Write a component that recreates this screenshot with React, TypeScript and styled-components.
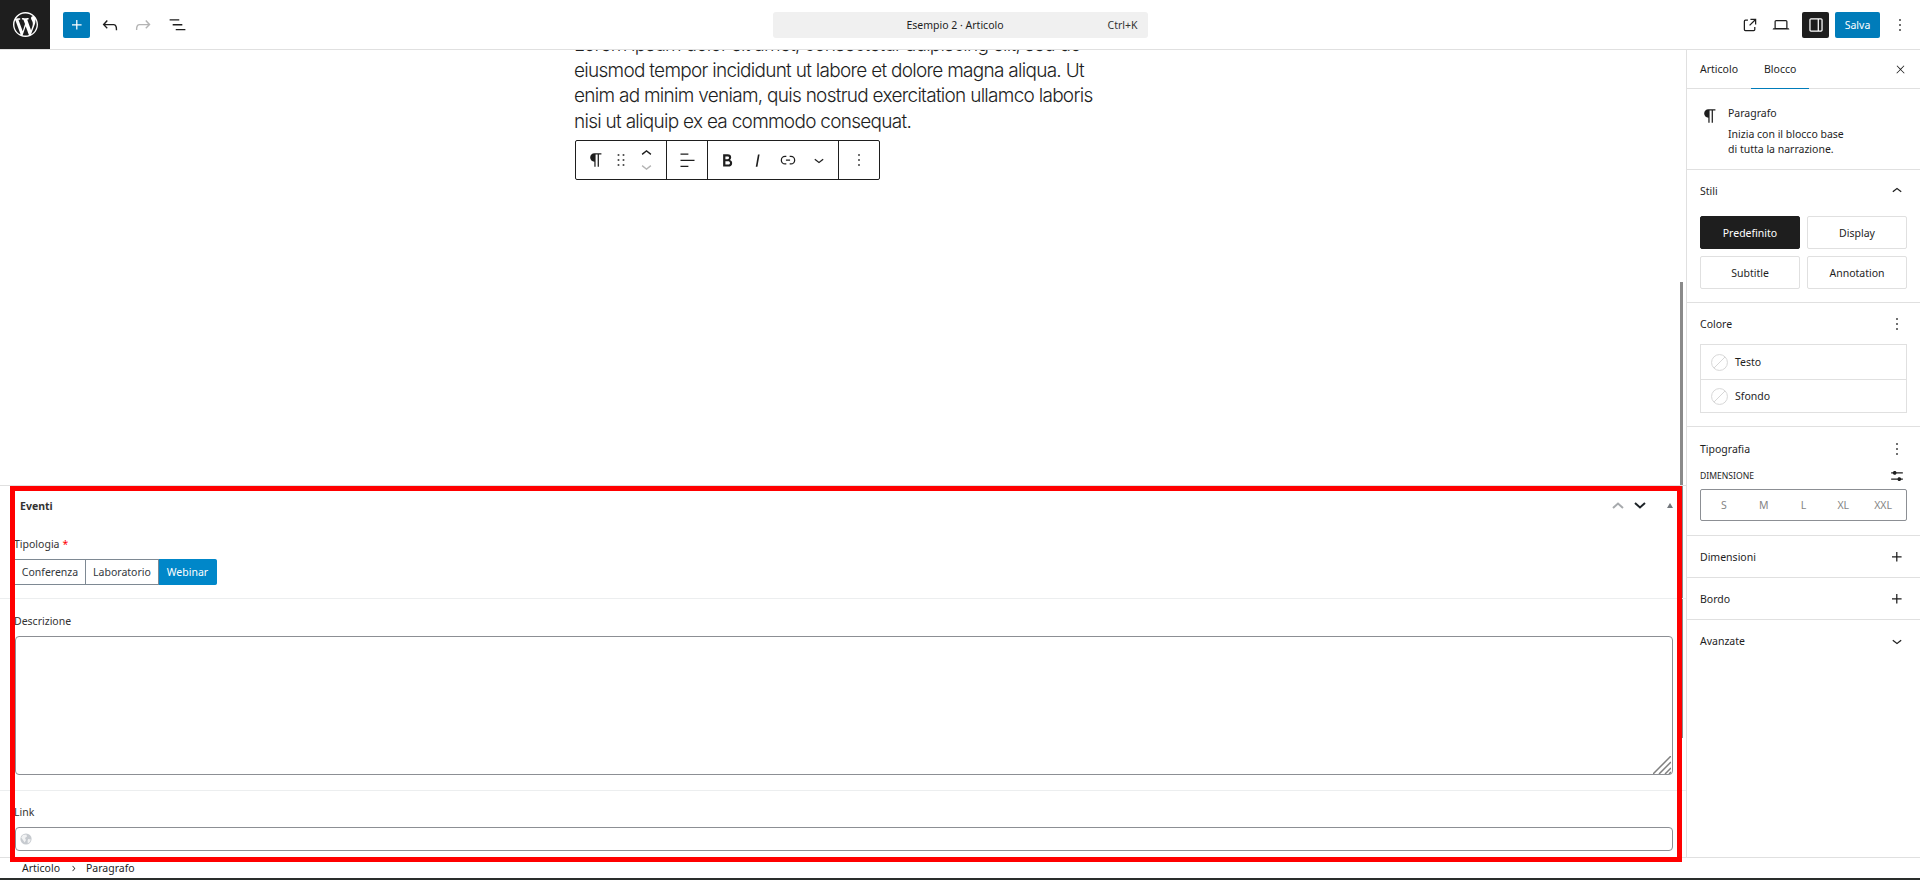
import React, { FC } from "react";
import styled, { createGlobalStyle } from "styled-components";

const GlobalStyle = createGlobalStyle`
    html, body {
        margin: 0;
        padding: 0;
        background: #fff;
    }
    body {
        font-family: "Noto Sans", "Open Sans", sans-serif;
        font-size: 10.5px;
        color: #1e1e1e;
    }
`;

const paths = {
    plus: "M11 12.5V17.5H12.5V12.5H17.5V11H12.5V6H11V11H6V12.5H11Z",
    undo: "M18.3 11.7c-.6-.6-1.4-.9-2.3-.9H6.7l2.9-3.3-1.1-1-4.5 5L8.5 16l1-1-2.7-2.7H16c.5 0 .9.2 1.3.5 1 1 1 3.4 1 4.5v.3h1.5v-.2c0-1.5 0-4.3-1.5-5.7z",
    redo: "M15.6 6.5l-1.1 1 2.9 3.3H8c-.9 0-1.7.3-2.3.9-1.4 1.5-1.4 4.2-1.4 5.6v.2h1.5v-.3c0-1.1 0-3.5 1-4.5.3-.3.7-.5 1.3-.5h9.2L14.5 15l1.1 1.1 4.6-4.6-4.6-5z",
    listView: "M3 6h11v1.5H3V6Zm3.5 5.5h11V13h-11v-1.5ZM21 17H10v1.5h11V17Z",
    external: "M19.5 4.5h-7V6h4.44l-5.97 5.97 1.06 1.06L18 7.06v4.44h1.5v-7Zm-13 1a2 2 0 0 0-2 2v10a2 2 0 0 0 2 2h10a2 2 0 0 0 2-2v-3H17v3a.5.5 0 0 1-.5.5h-10a.5.5 0 0 1-.5-.5v-10a.5.5 0 0 1 .5-.5h3V5.5h-3Z",
    laptop: "M20.5 16h-.7V8c0-1.1-.9-2-2-2H6.2c-1.1 0-2 .9-2 2v8h-.7c-.8 0-1.5.7-1.5 1.5h20c0-.8-.7-1.5-1.5-1.5zM5.7 8c0-.3.2-.5.5-.5h11.6c.3 0 .5.2.5.5v7.6H5.7V8z",
    drawer: "M18 4H6c-1.1 0-2 .9-2 2v12c0 1.1.9 2 2 2h12c1.1 0 2-.9 2-2V6c0-1.1-.9-2-2-2zm-4 14.5H6c-.3 0-.5-.2-.5-.5V6c0-.3.2-.5.5-.5h8v13zm4.5-.5c0 .3-.2.5-.5.5h-2.5v-13H18c.3 0 .5.2.5.5v12z",
    more: "M13 19h-2v-2h2v2zm0-6h-2v-2h2v2zm0-6h-2V5h2v2z",
    paragraph: "m9.99609 14v-.2251l.00391.0001v6.225h1.5v-14.5h2.5v14.5h1.5v-14.5h3v-1.5h-8.50391c-2.76142 0-5 2.23858-5 5 0 2.7614 2.23858 5 5 5z",
    drag: "M8 7h2V5H8v2zm0 6h2v-2H8v2zm0 6h2v-2H8v2zm6-14v2h2V5h-2zm0 8h2v-2h-2v2zm0 6h2v-2h-2v2z",
    up: "M6.5 12.4L12 8l5.5 4.4-.9 1.2L12 10l-4.5 3.6-1-1.2z",
    down: "M17.5 11.6L12 16l-5.5-4.4.9-1.2L12 14l4.5-3.6 1 1.2z",
    right: "M10.6 6L9.4 7l4.6 5-4.6 5 1.2 1 5.4-6z",
    align: "M13 5.5H4V4h9v1.5Zm7 7H4V11h16v1.5Zm-7 7H4V18h9v1.5Z",
    bold: "M14.7 11.3c1-.6 1.5-1.6 1.5-3 0-2.3-1.3-3.4-4-3.4H7v14h5.8c1.4 0 2.5-.3 3.3-1 .8-.7 1.2-1.7 1.2-2.9.1-1.9-.8-3.1-2.6-3.7zm-5.1-4h2.3c.6 0 1.1.1 1.4.4.3.3.5.7.5 1.2s-.2 1-.5 1.2c-.3.3-.8.4-1.4.4H9.6V7.3zm4.6 9c-.4.3-1 .4-1.7.4H9.6v-3.9h2.9c.7 0 1.3.2 1.7.5.4.3.6.8.6 1.5s-.2 1.2-.6 1.5z",
    italic: "M12.5 5L10 19h1.9l2.5-14z",
    link: "M10 17.389H8.444A5.194 5.194 0 1 1 8.444 7H10v1.5H8.444a3.694 3.694 0 0 0 0 7.389H10v1.5ZM14 7h1.556a5.194 5.194 0 0 1 0 10.39H14v-1.5h1.556a3.694 3.694 0 0 0 0-7.39H14V7Zm-4.5 6h5v-1.5h-5V13Z",
    close: "M13 11.8l6.1-6.3-1-1-6.1 6.2-6.1-6.2-1 1 6.1 6.3-6.5 6.7 1 1 6.5-6.6 6.5 6.6 1-1z",
    sliders: "m19 7.5h-7.628c-.3089-.87389-1.1423-1.5-2.122-1.5-.97966 0-1.81309.62611-2.12197 1.5h-2.12803v1.5h2.12803c.30888.87389 1.14231 1.5 2.12197 1.5.9797 0 1.8131-.62611 2.122-1.5h7.628zm0 7.5h-2.128c-.3089-.8739-1.1423-1.5-2.122-1.5s-1.8131.6261-2.122 1.5h-7.628v1.5h7.628c.3089.8739 1.1423 1.5 2.122 1.5s1.8131-.6261 2.122-1.5h2.128z",
};

const wpLogo = "M20 10c0-5.51-4.49-10-10-10C4.48 0 0 4.49 0 10c0 5.52 4.48 10 10 10 5.51 0 10-4.48 10-10zM7.78 15.37L4.37 6.22c.55-.02 1.17-.08 1.17-.08.5-.06.44-1.13-.06-1.11 0 0-1.45.11-2.37.11-.18 0-.37 0-.58-.01C4.12 2.69 6.87 1.11 10 1.11c2.33 0 4.45.87 6.05 2.34-.68-.11-1.65.39-1.65 1.58 0 .74.45 1.36.9 2.1.35.61.55 1.36.55 2.46 0 1.49-1.4 5-1.4 5l-3.03-8.37c.54-.02.82-.17.82-.17.5-.05.44-1.25-.06-1.22 0 0-1.44.12-2.38.12-.87 0-2.33-.12-2.33-.12-.5-.03-.56 1.2-.06 1.22l.92.08 1.26 3.41zM17.41 10c.24-.64.74-1.87.43-4.25.7 1.29 1.05 2.71 1.05 4.25 0 3.29-1.73 6.24-4.4 7.78.97-2.59 1.94-5.2 2.92-7.78zM6.1 18.09C3.12 16.65 1.11 13.53 1.11 10c0-1.3.23-2.48.72-3.59C3.25 10.3 4.67 14.2 6.1 18.09zm4.03-6.63l2.58 6.98c-.86.29-1.76.45-2.71.45-.79 0-1.57-.11-2.29-.33.81-2.38 1.62-4.74 2.42-7.1z";

type TGlyph = {
    readonly $size?: number;
    readonly $color?: string;
};

const GlyphSvg = styled.svg<TGlyph>`
    display: block;
    flex: none;
    width: ${props => props.$size ?? 20}px;
    height: ${props => props.$size ?? 20}px;
    fill: ${props => props.$color ?? "currentColor"};
`;

type TIcon = TGlyph & { readonly name: keyof typeof paths };

const Icon: FC<TIcon> = ({ name, $size, $color }) => (
    <GlyphSvg viewBox="0 0 24 24" $size={$size} $color={$color}>
        <path d={paths[name]} />
    </GlyphSvg>
);

const Page = styled.div`
    width: 1920px;
    height: 880px;
    box-sizing: border-box;
    border-bottom: 2px solid #2a2e2c;
    display: flex;
    flex-direction: column;
    overflow: hidden;
`;

const TopBar = styled.header`
    height: 50px;
    flex: none;
    box-sizing: border-box;
    border-bottom: 1px solid #e0e0e0;
    display: grid;
    grid-template-columns: 1fr 375px 1fr;
    align-items: center;
`;

const TopLeft = styled.div`
    display: flex;
    align-items: center;
    height: 49px;
`;

const LogoTile = styled.div`
    width: 50px;
    height: 49px;
    background: #1e1e1e;
    display: flex;
    align-items: center;
    justify-content: center;
    margin-right: 13px;
    fill: #fff;
`;

const InserterButton = styled.div`
    width: 27px;
    height: 26px;
    border-radius: 2px;
    background: #007cba;
    color: #fff;
    display: flex;
    align-items: center;
    justify-content: center;
`;

const ToolSlot = styled.div<{ $width: number; $color?: string }>`
    width: ${props => props.$width}px;
    display: flex;
    justify-content: center;
    color: ${props => props.$color ?? "#1e1e1e"};
`;

const CommandBar = styled.div`
    height: 26px;
    box-sizing: border-box;
    padding-right: 10px;
    border-radius: 3px;
    background: #f0f0f0;
    display: flex;
    align-items: center;
    justify-content: center;
    position: relative;
    color: #1e1e1e;
`;

const Shortcut = styled.span`
    position: absolute;
    right: 10px;
    top: 6px;
    color: #333;
`;

const TopRight = styled.div`
    display: flex;
    align-items: center;
    justify-content: flex-end;
    padding-right: 10px;
`;

const ViewToggle = styled.div`
    width: 27px;
    height: 26px;
    border-radius: 2px;
    background: #1e1e1e;
    color: #fff;
    display: flex;
    align-items: center;
    justify-content: center;
    margin: 0 6px;
`;

const SaveButton = styled.div`
    width: 45px;
    height: 26px;
    border-radius: 2px;
    background: #007cba;
    color: #fff;
    display: flex;
    align-items: center;
    justify-content: center;
    margin-right: 10px;
`;

const Body = styled.div`
    flex: 1;
    min-height: 0;
    display: flex;
`;

const Editor = styled.main`
    flex: 1;
    min-width: 0;
    display: flex;
    flex-direction: column;
    position: relative;
`;

const Canvas = styled.div`
    flex: 1;
    min-height: 0;
    overflow: hidden;
    padding-left: 574px;
`;

const Lorem = styled.p`
    margin: -18px 0 0;
    width: 526px;
    font-family: Inter, "Noto Sans", sans-serif;
    font-size: 19px;
    font-weight: 300;
    line-height: 25.5px;
    letter-spacing: -0.72px;
    color: #1e1e1e;
`;

const BlockToolbar = styled.div`
    margin: 6px 0 0 1px;
    width: 305px;
    height: 40px;
    box-sizing: border-box;
    border: 1px solid #1e1e1e;
    border-radius: 2px;
    display: flex;
    background: #fff;
`;

const ToolbarGroup = styled.div<{ $width: number }>`
    width: ${props => props.$width}px;
    box-sizing: border-box;
    display: flex;
    align-items: center;
    justify-content: center;
    border-right: 1px solid #1e1e1e;

    &:last-child {
        border-right: none;
    }
`;

const MoverStack = styled.div`
    width: 25px;
    display: flex;
    flex-direction: column;
    align-items: center;
`;

const MoverSlot = styled.div`
    height: 13px;
    display: flex;
    align-items: center;
`;

const ScrollThumb = styled.div`
    position: absolute;
    top: 232px;
    right: 3px;
    width: 3px;
    height: 456px;
    background: #8a8a8a;
`;

const MetaBox = styled.section`
    flex: none;
    height: 372px;
    box-sizing: border-box;
    border-top: 1px solid #e0e0e0;
    position: relative;
    display: flex;
    flex-direction: column;
`;

const Highlight = styled.div`
    position: absolute;
    left: 10px;
    right: 4px;
    top: 0;
    bottom: -5px;
    border: 5px solid #ff0000;
    pointer-events: none;
    z-index: 2;
`;

const MetaHeader = styled.div`
    height: 39px;
    flex: none;
    display: flex;
    align-items: center;
    padding: 0 13px 0 20px;
    font-weight: 700;
    color: #333;
`;

const MetaTitle = styled.span`
    flex: 1;
`;

const HeaderArrows = styled.div`
    display: flex;
    align-items: center;
    gap: 9.5px;
`;

const HeaderChevron = styled.svg<{ $stroke: string }>`
    display: block;
    width: 12px;
    height: 7px;
    fill: none;
    stroke: ${props => props.$stroke};
    stroke-width: 2;
`;

const CollapseArrow = styled.span`
    width: 0;
    height: 0;
    margin-left: 12px;
    border-left: 3.5px solid transparent;
    border-right: 3.5px solid transparent;
    border-bottom: 5px solid #72777c;
`;

const MetaField = styled.div<{ $height: number; $top: number }>`
    height: ${props => props.$height}px;
    flex: none;
    box-sizing: border-box;
    padding: ${props => props.$top}px 13px 0 15px;
    border-bottom: 1px solid #eceeef;

    &:last-child {
        border-bottom: none;
    }
`;

const FieldLabel = styled.div`
    height: 16px;
    line-height: 16px;
    margin: 0 0 7px -1px;
    color: #333;
`;

const Required = styled.span`
    color: #f00;
    margin-left: 3px;
`;

const RadioGroup = styled.div`
    display: flex;
    height: 26px;
`;

const RadioItem = styled.div<{ $width: number; $active?: boolean }>`
    width: ${props => props.$width}px;
    box-sizing: border-box;
    display: flex;
    align-items: center;
    justify-content: center;
    border: 1px solid ${props => (props.$active ? "#0087c9" : "#7e8993")};
    border-left-width: 0;
    border-radius: ${props => (props.$active ? "0 2px 2px 0" : "0")};
    background: ${props => (props.$active ? "#0087c9" : "#fff")};
    color: ${props => (props.$active ? "#fff" : "#32373c")};
`;

const AreaBox = styled.div`
    position: relative;
    height: 139px;
`;

const AreaInput = styled.textarea`
    display: block;
    width: 100%;
    height: 100%;
    box-sizing: border-box;
    border: 1px solid #8c8f94;
    border-radius: 4px;
    background: #fff;
    resize: none;
    outline: none;
`;

const ResizeGrip = styled.svg`
    position: absolute;
    right: 2px;
    bottom: 1px;
    width: 18px;
    height: 18px;
    fill: none;
    stroke: #808080;
    stroke-width: 1.5;
`;

const LinkBox = styled.div`
    height: 24px;
    box-sizing: border-box;
    border: 1px solid #8c8f94;
    border-radius: 4px;
    display: flex;
    align-items: center;
    padding-left: 4px;
`;

const Sidebar = styled.aside`
    width: 234px;
    flex: none;
    box-sizing: border-box;
    border-left: 1px solid #e0e0e0;
    display: flex;
    flex-direction: column;
`;

const TabRow = styled.div`
    height: 39px;
    flex: none;
    box-sizing: border-box;
    border-bottom: 1px solid #e0e0e0;
    display: flex;
    align-items: center;
    padding: 0 13px 0 0;
`;

const Tab = styled.div<{ $active?: boolean }>`
    height: 39px;
    box-sizing: border-box;
    padding: 0 13px;
    display: flex;
    align-items: center;
    margin-bottom: -1px;
    border-bottom: 1px solid ${props => (props.$active ? "#007cba" : "transparent")};
`;

const TabSpacer = styled.div`
    flex: 1;
`;

const BlockCard = styled.div`
    height: 81px;
    flex: none;
    box-sizing: border-box;
    border-bottom: 1px solid #e0e0e0;
    padding: 17px 13px 0 13px;
    display: flex;
    gap: 8px;
`;

const CardBody = styled.div`
    line-height: 15px;
`;

const CardTitle = styled.div`
    margin-bottom: 6px;
`;

const Panel = styled.div`
    flex: none;
    box-sizing: border-box;
    border-bottom: 1px solid #e0e0e0;
    padding: 13px;
`;

const TypePanel = styled(Panel)`
    padding: 14px 13px;
`;

const PanelHead = styled.div`
    height: 16px;
    display: flex;
    align-items: center;
    justify-content: space-between;
`;

const CollapsedPanel = styled(Panel)<{ $last?: boolean }>`
    height: 42px;
    padding: 0 13px;
    display: flex;
    align-items: center;
    justify-content: space-between;
    ${props => props.$last && "border-bottom: none;"}
`;

const StyleGrid = styled.div`
    margin-top: 17px;
    display: grid;
    grid-template-columns: 100px 100px;
    grid-auto-rows: 33px;
    gap: 7px;
`;

const StyleChoice = styled.div<{ $active?: boolean }>`
    border: 1px solid ${props => (props.$active ? "#1e1e1e" : "#e0e0e0")};
    border-radius: 2px;
    background: ${props => (props.$active ? "#1e1e1e" : "#fff")};
    color: ${props => (props.$active ? "#fff" : "#1e1e1e")};
    display: flex;
    align-items: center;
    justify-content: center;
`;

const ColorList = styled.div`
    margin-top: 12px;
    height: 69px;
    box-sizing: border-box;
    border: 1px solid #e0e0e0;
`;

const ColorRow = styled.div`
    height: 35px;
    box-sizing: border-box;
    display: flex;
    align-items: center;
    gap: 7px;
    padding-left: 10px;
    border-bottom: 1px solid #e0e0e0;

    &:last-child {
        height: 32px;
        border-bottom: none;
    }
`;

const SizeHead = styled.div`
    margin-top: 6px;
    height: 26px;
    display: flex;
    align-items: center;
    justify-content: space-between;
    font-size: 8.6px;
`;

const SizeControl = styled.div`
    height: 32px;
    box-sizing: border-box;
    border: 1px solid #8c8f94;
    border-radius: 2px;
    padding: 0 3px;
    display: grid;
    grid-template-columns: repeat(5, 1fr);
    align-items: center;
    justify-items: center;
    color: #858585;
`;

const Footer = styled.footer`
    height: 21px;
    flex: none;
    box-sizing: border-box;
    border-top: 1px solid #e0e0e0;
    display: flex;
    align-items: center;
    padding-left: 22px;
    gap: 7.5px;
`;

const Swatch: FC = () => (
    <svg viewBox="0 0 18 18" width="17" height="17" style={{ display: "block" }}>
        <circle cx="9" cy="9" r="8.4" fill="#fff" stroke="#d4d4d4" />
        <path d="M3.2 14.8 14.8 3.2" stroke="#d4d4d4" />
    </svg>
);

const App: FC = () => (
    <>
        <GlobalStyle />
        <Page>
            <TopBar>
                <TopLeft>
                    <LogoTile>
                        <svg viewBox="0 0 20 20" width="25" height="25">
                            <path d={wpLogo} />
                        </svg>
                    </LogoTile>
                    <InserterButton>
                        <Icon name="plus" $size={20} />
                    </InserterButton>
                    <ToolSlot $width={40}><Icon name="undo" $size={22} /></ToolSlot>
                    <ToolSlot $width={26} $color="#b4b4b4"><Icon name="redo" $size={22} /></ToolSlot>
                    <ToolSlot $width={42}><Icon name="listView" $size={21} /></ToolSlot>
                </TopLeft>
                <CommandBar>
                    Esempio 2 · Articolo
                    <Shortcut>Ctrl+K</Shortcut>
                </CommandBar>
                <TopRight>
                    <ToolSlot $width={33}><Icon name="external" $size={20} /></ToolSlot>
                    <ToolSlot $width={30}><Icon name="laptop" $size={20} /></ToolSlot>
                    <ViewToggle><Icon name="drawer" $size={20} /></ViewToggle>
                    <SaveButton>Salva</SaveButton>
                    <ToolSlot $width={20}><Icon name="more" $size={20} /></ToolSlot>
                </TopRight>
            </TopBar>
            <Body>
                <Editor>
                    <Canvas>
                        <Lorem>
                            Lorem ipsum dolor sit amet, consectetur adipiscing elit, sed do eiusmod tempor incididunt ut
                            labore et dolore magna aliqua. Ut enim ad minim veniam, quis nostrud exercitation ullamco
                            laboris nisi ut aliquip ex ea commodo consequat.
                        </Lorem>
                        <BlockToolbar>
                            <ToolbarGroup $width={91}>
                                <ToolSlot $width={25}><Icon name="paragraph" $size={20} /></ToolSlot>
                                <ToolSlot $width={25}><Icon name="drag" $size={20} /></ToolSlot>
                                <MoverStack>
                                    <MoverSlot><Icon name="up" $size={21} /></MoverSlot>
                                    <MoverSlot><Icon name="down" $size={21} $color="#b4b4b4" /></MoverSlot>
                                </MoverStack>
                            </ToolbarGroup>
                            <ToolbarGroup $width={41}><Icon name="align" $size={21} /></ToolbarGroup>
                            <ToolbarGroup $width={131}>
                                <ToolSlot $width={30.5}><Icon name="bold" $size={21} /></ToolSlot>
                                <ToolSlot $width={30.5}><Icon name="italic" $size={21} /></ToolSlot>
                                <ToolSlot $width={30.5}><Icon name="link" $size={20} /></ToolSlot>
                                <ToolSlot $width={30.5}><Icon name="down" $size={20} /></ToolSlot>
                            </ToolbarGroup>
                            <ToolbarGroup $width={40}><Icon name="more" $size={20} /></ToolbarGroup>
                        </BlockToolbar>
                    </Canvas>
                    <ScrollThumb />
                    <MetaBox>
                        <Highlight />
                        <MetaHeader>
                            <MetaTitle>Eventi</MetaTitle>
                            <HeaderArrows>
                                <HeaderChevron viewBox="0 0 12 7" $stroke="#a7aaad"><path d="M1 6 6 1.5 11 6" /></HeaderChevron>
                                <HeaderChevron viewBox="0 0 12 7" $stroke="#1d2327"><path d="M1 1 6 5.5 11 1" /></HeaderChevron>
                                <CollapseArrow />
                            </HeaderArrows>
                        </MetaHeader>
                        <MetaField $height={74} $top={11}>
                            <FieldLabel>Tipologia<Required>*</Required></FieldLabel>
                            <RadioGroup>
                                <RadioItem $width={71}>Conferenza</RadioItem>
                                <RadioItem $width={73}>Laboratorio</RadioItem>
                                <RadioItem $width={58} $active>Webinar</RadioItem>
                            </RadioGroup>
                        </MetaField>
                        <MetaField $height={192} $top={14}>
                            <FieldLabel>Descrizione</FieldLabel>
                            <AreaBox>
                                <AreaInput readOnly />
                                <ResizeGrip viewBox="0 0 18 18">
                                    <path d="M0 18 18 0M6 18 18 6M12 18 18 12M16 18 18 16" />
                                </ResizeGrip>
                            </AreaBox>
                        </MetaField>
                        <MetaField $height={66} $top={13}>
                            <FieldLabel>Link</FieldLabel>
                            <LinkBox>
                                <svg viewBox="0 0 12 12" width="12" height="12" style={{ display: "block" }}>
                                    <circle cx="6" cy="6" r="5.6" fill="#c6cacf" />
                                    <path d="M3 2 6.4 1.4 7 3.4 5 5 6 7 4.6 9.4 2.6 6.6 1.2 4.6ZM8.2 6 10.8 6.4 9.8 9 7.8 10.4 7.6 7.6Z" fill="#f1f2f3" />
                                </svg>
                            </LinkBox>
                        </MetaField>
                    </MetaBox>
                </Editor>
                <Sidebar>
                    <TabRow>
                        <Tab>Articolo</Tab>
                        <Tab $active>Blocco</Tab>
                        <TabSpacer />
                        <Icon name="close" $size={13} />
                    </TabRow>
                    <BlockCard>
                        <Icon name="paragraph" $size={20} />
                        <CardBody>
                            <CardTitle>Paragrafo</CardTitle>
                            Inizia con il blocco base<br />
                            di tutta la narrazione.
                        </CardBody>
                    </BlockCard>
                    <Panel>
                        <PanelHead>Stili<Icon name="up" $size={20} /></PanelHead>
                        <StyleGrid>
                            <StyleChoice $active>Predefinito</StyleChoice>
                            <StyleChoice>Display</StyleChoice>
                            <StyleChoice>Subtitle</StyleChoice>
                            <StyleChoice>Annotation</StyleChoice>
                        </StyleGrid>
                    </Panel>
                    <Panel>
                        <PanelHead>Colore<Icon name="more" $size={20} /></PanelHead>
                        <ColorList>
                            <ColorRow><Swatch />Testo</ColorRow>
                            <ColorRow><Swatch />Sfondo</ColorRow>
                        </ColorList>
                    </Panel>
                    <TypePanel>
                        <PanelHead>Tipografia<Icon name="more" $size={20} /></PanelHead>
                        <SizeHead>DIMENSIONE<Icon name="sliders" $size={20} /></SizeHead>
                        <SizeControl>
                            <span>S</span><span>M</span><span>L</span><span>XL</span><span>XXL</span>
                        </SizeControl>
                    </TypePanel>
                    <CollapsedPanel>Dimensioni<Icon name="plus" $size={20} /></CollapsedPanel>
                    <CollapsedPanel>Bordo<Icon name="plus" $size={20} /></CollapsedPanel>
                    <CollapsedPanel $last>Avanzate<Icon name="down" $size={20} /></CollapsedPanel>
                </Sidebar>
            </Body>
            <Footer>
                Articolo
                <Icon name="right" $size={11} />
                Paragrafo
            </Footer>
        </Page>
    </>
);

export default App;
